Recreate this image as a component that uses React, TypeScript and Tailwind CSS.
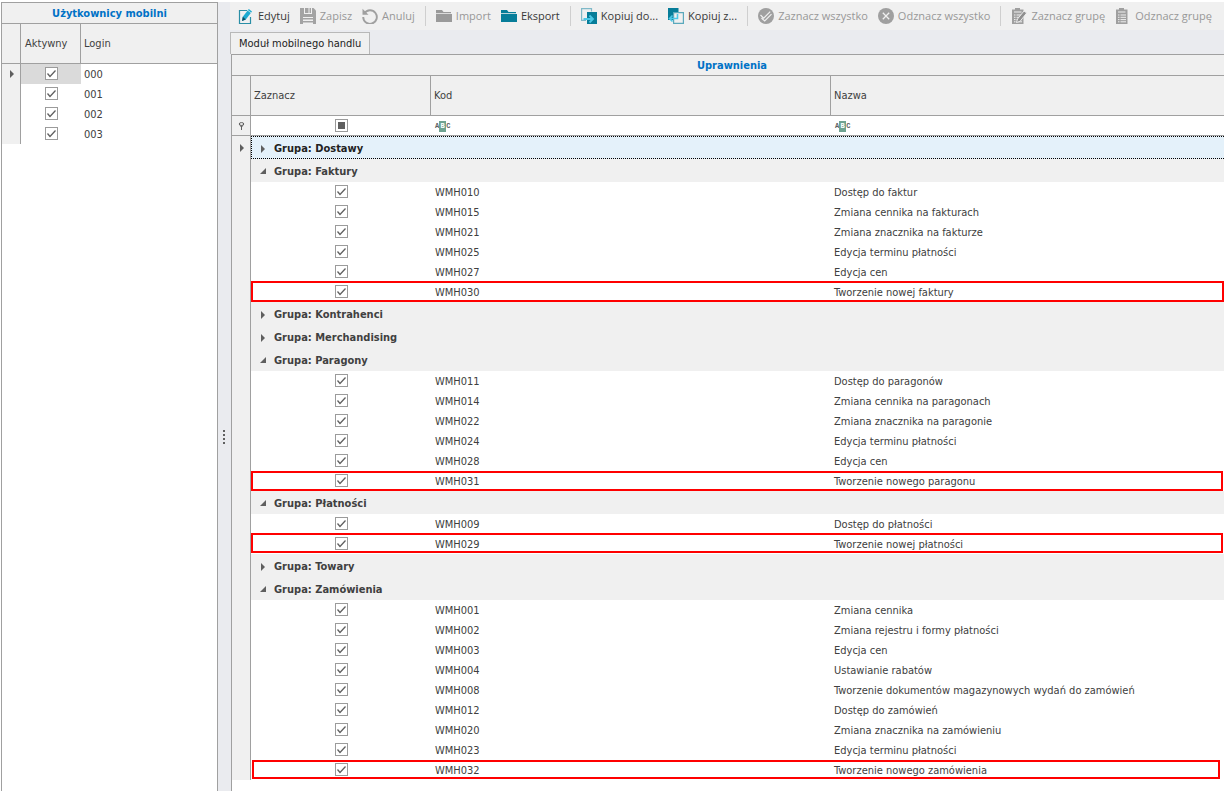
import { Fragment, useState, type ReactNode } from "react";
import clsx from "clsx";

type Permission = { code: string; name: string; mark?: string };
type Group = { name: string; open: boolean; rows: Permission[] };

const users = ["000", "001", "002", "003"];

const initialGroups: Group[] = [
  { name: "Dostawy", open: false, rows: [] },
  {
    name: "Faktury",
    open: true,
    rows: [
      { code: "WMH010", name: "Dostęp do faktur" },
      { code: "WMH015", name: "Zmiana cennika na fakturach" },
      { code: "WMH021", name: "Zmiana znacznika na fakturze" },
      { code: "WMH025", name: "Edycja terminu płatności" },
      { code: "WMH027", name: "Edycja cen" },
      { code: "WMH030", name: "Tworzenie nowej faktury", mark: "-top-px right-0 bottom-0 left-[19px]" },
    ],
  },
  { name: "Kontrahenci", open: false, rows: [] },
  { name: "Merchandising", open: false, rows: [] },
  {
    name: "Paragony",
    open: true,
    rows: [
      { code: "WMH011", name: "Dostęp do paragonów" },
      { code: "WMH014", name: "Zmiana cennika na paragonach" },
      { code: "WMH022", name: "Zmiana znacznika na paragonie" },
      { code: "WMH024", name: "Edycja terminu płatności" },
      { code: "WMH028", name: "Edycja cen" },
      { code: "WMH031", name: "Tworzenie nowego paragonu", mark: "top-0 right-px bottom-0 left-[19px]" },
    ],
  },
  {
    name: "Płatności",
    open: true,
    rows: [
      { code: "WMH009", name: "Dostęp do płatności" },
      { code: "WMH029", name: "Tworzenie nowej płatności", mark: "-top-px right-px bottom-px left-[19px]" },
    ],
  },
  { name: "Towary", open: false, rows: [] },
  {
    name: "Zamówienia",
    open: true,
    rows: [
      { code: "WMH001", name: "Zmiana cennika" },
      { code: "WMH002", name: "Zmiana rejestru i formy płatności" },
      { code: "WMH003", name: "Edycja cen" },
      { code: "WMH004", name: "Ustawianie rabatów" },
      { code: "WMH008", name: "Tworzenie dokumentów magazynowych wydań do zamówień" },
      { code: "WMH012", name: "Dostęp do zamówień" },
      { code: "WMH020", name: "Zmiana znacznika na zamówieniu" },
      { code: "WMH023", name: "Edycja terminu płatności" },
      { code: "WMH032", name: "Tworzenie nowego zamówienia", mark: "top-0 right-1 bottom-px left-5" },
    ],
  },
];

function Icon({ children }: { children: ReactNode }) {
  return (
    <svg viewBox="0 0 16 16" className="size-4 shrink-0" aria-hidden="true">
      {children}
    </svg>
  );
}

function EditIcon() {
  return (
    <Icon>
      <path d="M9 2.5H1.5v13h11V9" fill="none" stroke="#2b8fa6" strokeWidth="1.2" />
      <path d="M4 13l.8-4.200L10.800 1l3.200 2.500-6.200 8z" fill="#1eaad0" />
      <path d="M4 13l.8-4.200 3 2.700z" fill="#0c4f66" />
      <path d="M9.800 2.300l3.200 2.500" stroke="#f0f0f0" strokeWidth=".7" />
    </Icon>
  );
}

function SaveIcon() {
  return (
    <Icon>
      <path d="M0 0h13.5L16 2.5V16H0z" fill="#a3a3a3" />
      <path d="M4 0h8v6H4zM3 9h10v7H3z" fill="#f0f0f0" />
      <path d="M5 0h3.500v5H5zM9.500 0h1.500v5H9.500zM3 10h10v1.500H3zM3 13h10v1.500H3z" fill="#a3a3a3" />
    </Icon>
  );
}

function UndoIcon() {
  return (
    <Icon>
      <path d="M2.400 5.200A6.800 6.800 0 1 1 1.200 9" fill="none" stroke="#a0a0a0" strokeWidth="1.900" />
      <path d="M.5.800v6h6z" fill="#a0a0a0" />
    </Icon>
  );
}

function FolderIcon({ color }: { color: string }) {
  return (
    <Icon>
      <path d="M0 2h6l1.500 2H15v1.200H0z" fill={color} />
      <path d="M0 6h16v8H0z" fill={color} />
    </Icon>
  );
}

function CopyToIcon() {
  return (
    <Icon>
      <path d="M6 4h10v12H6z" fill="#077d99" />
      <path d="M10.500 3.500V.600H.600v11.800H5" fill="none" stroke="#7fb9c8" strokeWidth="1.200" />
      <path d="M2.500 11h9M8.500 7.500l3.500 3.500-3.500 3.500" fill="none" stroke="#4cc8e6" strokeWidth="1.800" />
    </Icon>
  );
}

function CopyFromIcon() {
  return (
    <Icon>
      <path d="M0 0h10.500v4H5v8H0z" fill="#077d99" />
      <path d="M5.600 4.600h9.800v10.800H5.600z" fill="#f0f0f0" stroke="#5ba9bc" strokeWidth="1.200" />
      <path d="M9.500 6v4.500H1.500M4.500 7.500l-3 3 3 3" fill="none" stroke="#4cc8e6" strokeWidth="1.600" />
    </Icon>
  );
}

function CheckAllIcon() {
  return (
    <Icon>
      <circle cx="8" cy="8" r="8" fill="#9f9f9f" />
      <path d="M2.500 7l3.200 3.200 6.500-6.500M3.500 10l3.200 3 6.800-6.800" fill="none" stroke="#f0f0f0" strokeWidth="1.200" />
    </Icon>
  );
}

function UncheckAllIcon() {
  return (
    <Icon>
      <circle cx="8" cy="8" r="8" fill="#9f9f9f" />
      <path d="M4.800 4.800l6.400 6.400M11.200 4.800l-6.400 6.400" stroke="#f0f0f0" strokeWidth="1.300" />
    </Icon>
  );
}

function ClipboardIcon({ pencil = false }: { pencil?: boolean }) {
  return (
    <Icon>
      <path d="M1 1.500h3V0h5v1.500h3.500V16H1z" fill="#9f9f9f" />
      <path d="M3 4h7.500M3 7h1.500M5.500 7h5.500M3 9.300h1.500M5.500 9.300h5.500M3 11.600h1.500M5.500 11.600h5.500M3 13.800h1.500M5.500 13.800h5.500" stroke="#f0f0f0" strokeWidth="1" />
      {pencil && (
        <path d="M5.500 14.500l1-3.500 6.500-8 2.700 2-6.500 8.200z" fill="#8f8f8f" stroke="#f0f0f0" strokeWidth=".9" />
      )}
    </Icon>
  );
}

function ToolButton({ icon, disabled, children }: { icon: ReactNode; disabled?: boolean; children: ReactNode }) {
  return (
    <button
      type="button"
      disabled={disabled}
      className="flex items-center gap-1 whitespace-nowrap text-[#383838] disabled:text-[#989898]"
    >
      {icon}
      {children}
    </button>
  );
}

function Separator() {
  return <span className="h-5 w-px shrink-0 bg-[#cfcfcf]" />;
}

function Toolbar() {
  return (
    <div className="flex h-7 shrink-0 items-center gap-2.5 overflow-hidden bg-[#f0f0f0] pl-2 font-['Open_Sans',sans-serif] text-[11px]">
      <ToolButton icon={<EditIcon />}>Edytuj</ToolButton>
      <ToolButton icon={<SaveIcon />} disabled>Zapisz</ToolButton>
      <ToolButton icon={<UndoIcon />} disabled>Anuluj</ToolButton>
      <Separator />
      <ToolButton icon={<FolderIcon color="#9a9a9a" />} disabled>Import</ToolButton>
      <ToolButton icon={<FolderIcon color="#077d99" />}>Eksport</ToolButton>
      <Separator />
      <ToolButton icon={<CopyToIcon />}>Kopiuj do...</ToolButton>
      <ToolButton icon={<CopyFromIcon />}>Kopiuj z...</ToolButton>
      <Separator />
      <ToolButton icon={<CheckAllIcon />} disabled>Zaznacz wszystko</ToolButton>
      <ToolButton icon={<UncheckAllIcon />} disabled>Odznacz wszystko</ToolButton>
      <Separator />
      <ToolButton icon={<ClipboardIcon pencil />} disabled>Zaznacz grupę</ToolButton>
      <ToolButton icon={<ClipboardIcon />} disabled>Odznacz grupę</ToolButton>
    </div>
  );
}

function Checkbox({ label, mixed }: { label: string; mixed?: boolean }) {
  return (
    <label className="mx-auto grid size-[13px] *:col-start-1 *:row-start-1">
      <input
        type="checkbox"
        defaultChecked={!mixed}
        aria-label={label}
        className="peer size-[13px] appearance-none border border-[#9b9b9b] bg-white"
      />
      {mixed ? (
        <span className="pointer-events-none m-[3px] bg-[#606060]" />
      ) : (
        <svg viewBox="0 0 13 13" className="pointer-events-none hidden size-[13px] peer-checked:block">
          <path d="M2.500 6.500l2.500 3 5.500-6" fill="none" stroke="#606060" strokeWidth="1.300" />
        </svg>
      )}
    </label>
  );
}

function Pointer() {
  return (
    <svg viewBox="0 0 4 8" className="mx-auto h-2 w-1" aria-hidden="true">
      <path d="M0 0l4 4-4 4z" fill="#5f5f5f" />
    </svg>
  );
}

function TextFilter({ label }: { label: string }) {
  return (
    <label className="flex items-center font-['Liberation_Mono',monospace] text-[7px] leading-[11px] font-bold text-[#606060]">
      <span>A</span>
      <span className="w-[7px] bg-[#6fa391] text-center text-white">B</span>
      <span>C</span>
      <input type="text" aria-label={label} className="ml-1 h-4 min-w-0 flex-1 text-[11px] outline-none" />
    </label>
  );
}

function UsersPanel() {
  return (
    <aside className="w-[217px] shrink-0 border-x border-t border-[#a0a0a0] bg-white">
      <h2 className="h-5 bg-[#f0f0f0] text-center text-[11px] leading-[22px] font-bold text-[#0072c6]">
        Użytkownicy mobilni
      </h2>
      <table className="w-full table-fixed border-separate border-spacing-0">
        <thead>
          <tr className="h-[41px] bg-[#f0f0f0] text-left *:border-y *:border-[#a0a0a0] *:font-normal">
            <th className="w-[19px] border-r" />
            <th className="w-[60px] border-r pl-1">Aktywny</th>
            <th className="pl-[3px]">Login</th>
          </tr>
        </thead>
        <tbody>
          {users.map((login, i) => (
            <tr key={login} className="h-5">
              <td className="border-r border-[#a0a0a0] bg-[#f0f0f0] pl-0.5">{i === 0 && <Pointer />}</td>
              <td className={clsx("pb-0.5", i === 0 && "bg-[#dadada]")}>
                <Checkbox label={`Aktywny ${login}`} />
              </td>
              <td className="pt-0.5 pl-[3px]">{login}</td>
            </tr>
          ))}
        </tbody>
      </table>
    </aside>
  );
}

function PermissionsGrid() {
  const [groups, setGroups] = useState(initialGroups);

  const toggle = (name: string) =>
    setGroups(groups.map((g) => (g.name === name ? { ...g, open: !g.open } : g)));

  return (
    <div className="ml-px flex-1 border-t border-l border-[#a0a0a0] bg-white">
      <h2 className="h-5 bg-[#f0f0f0] pl-2 text-center text-[11px] leading-[22px] font-bold text-[#0072c6]">
        Uprawnienia
      </h2>
      <table className="w-full table-fixed border-separate border-spacing-0">
        <thead>
          <tr className="h-[41px] bg-[#f0f0f0] text-left *:border-y *:border-[#a0a0a0] *:font-normal">
            <th className="w-[19px] border-r" />
            <th className="w-[180px] border-r pl-[3px]">Zaznacz</th>
            <th className="w-[400px] border-r pl-[3px]">Kod</th>
            <th className="pl-[3px]">Nazwa</th>
          </tr>
          <tr className="h-5 *:border-b *:border-[#a0a0a0]">
            <td className="border-r bg-[#f0f0f0]">
              <svg viewBox="0 0 7 8" className="mx-auto h-2 w-[7px]" aria-hidden="true">
                <ellipse cx="3.500" cy="2" rx="2.300" ry="1.400" fill="none" stroke="#606060" />
                <path d="M1.500 3.500h4L4 5v3H3V5z" fill="#606060" />
              </svg>
            </td>
            <td><Checkbox label="Filtr Zaznacz" mixed /></td>
            <td className="pt-0.5 pl-1"><TextFilter label="Filtr Kod" /></td>
            <td className="pt-0.5 pl-1"><TextFilter label="Filtr Nazwa" /></td>
          </tr>
        </thead>
        <tbody>
          {groups.map((group, i) => (
            <Fragment key={group.name}>
              <tr className="h-[23px]">
                <td className="border-r border-[#a0a0a0] bg-[#f0f0f0] pl-0.5">{i === 0 && <Pointer />}</td>
                <td
                  colSpan={3}
                  className={clsx(
                    "pt-0.5",
                    i === 0 ? "border-y border-l border-dotted border-black bg-[#e4f1fa] pl-[7px] text-[#222]" : "bg-[#f0f0f0] pl-2"
                  )}
                >
                  <button
                    type="button"
                    aria-expanded={group.open}
                    onClick={() => toggle(group.name)}
                    className="flex items-center gap-2 font-bold"
                  >
                    <svg viewBox="0 0 7 8" className="h-2 w-[7px]" aria-hidden="true">
                      <path d={group.open ? "M7 0v6H1z" : "M2 0l4 4-4 4z"} fill="#5f5f5f" />
                    </svg>
                    Grupa: {group.name}
                  </button>
                </td>
              </tr>
              {group.open &&
                group.rows.map((row) => (
                  <tr key={row.code} className="relative h-5">
                    <td className="border-r border-[#a0a0a0] bg-[#f0f0f0]" />
                    <td className="pb-0.5">
                      <Checkbox label={`Zaznacz ${row.code}`} />
                      {row.mark && (
                        <span className={clsx("pointer-events-none absolute border-2 border-[#f00]", row.mark)} />
                      )}
                    </td>
                    <td className="pt-0.5 pl-1">{row.code}</td>
                    <td className="truncate pt-0.5 pl-[3px]">{row.name}</td>
                  </tr>
                ))}
            </Fragment>
          ))}
        </tbody>
      </table>
    </div>
  );
}

export default function App() {
  return (
    <div className="flex min-h-screen bg-white pt-0.5 font-['DejaVu_Sans_Condensed','Noto_Sans',sans-serif] text-[11px] leading-4 text-[#404040]">
      <div className="flex min-w-0 flex-1 pl-px">
        <UsersPanel />
        <div className="flex w-3 shrink-0 flex-col items-center justify-center gap-0.5 bg-[#eaebef] pt-20">
          {[0, 1, 2, 3].map((dot) => (
            <span key={dot} className="size-0.5 bg-[#606060]" />
          ))}
        </div>
        <main className="flex min-w-0 flex-1 flex-col bg-[#eaebef]">
          <Toolbar />
          <div role="tablist" className="flex pt-0.5">
            <button
              type="button"
              role="tab"
              aria-selected="true"
              className="h-[22px] border-x border-t border-[#b8b8b8] bg-[#f0f0f0] px-2 text-[#222]"
            >
              Moduł mobilnego handlu
            </button>
          </div>
          <PermissionsGrid />
        </main>
      </div>
    </div>
  );
}
